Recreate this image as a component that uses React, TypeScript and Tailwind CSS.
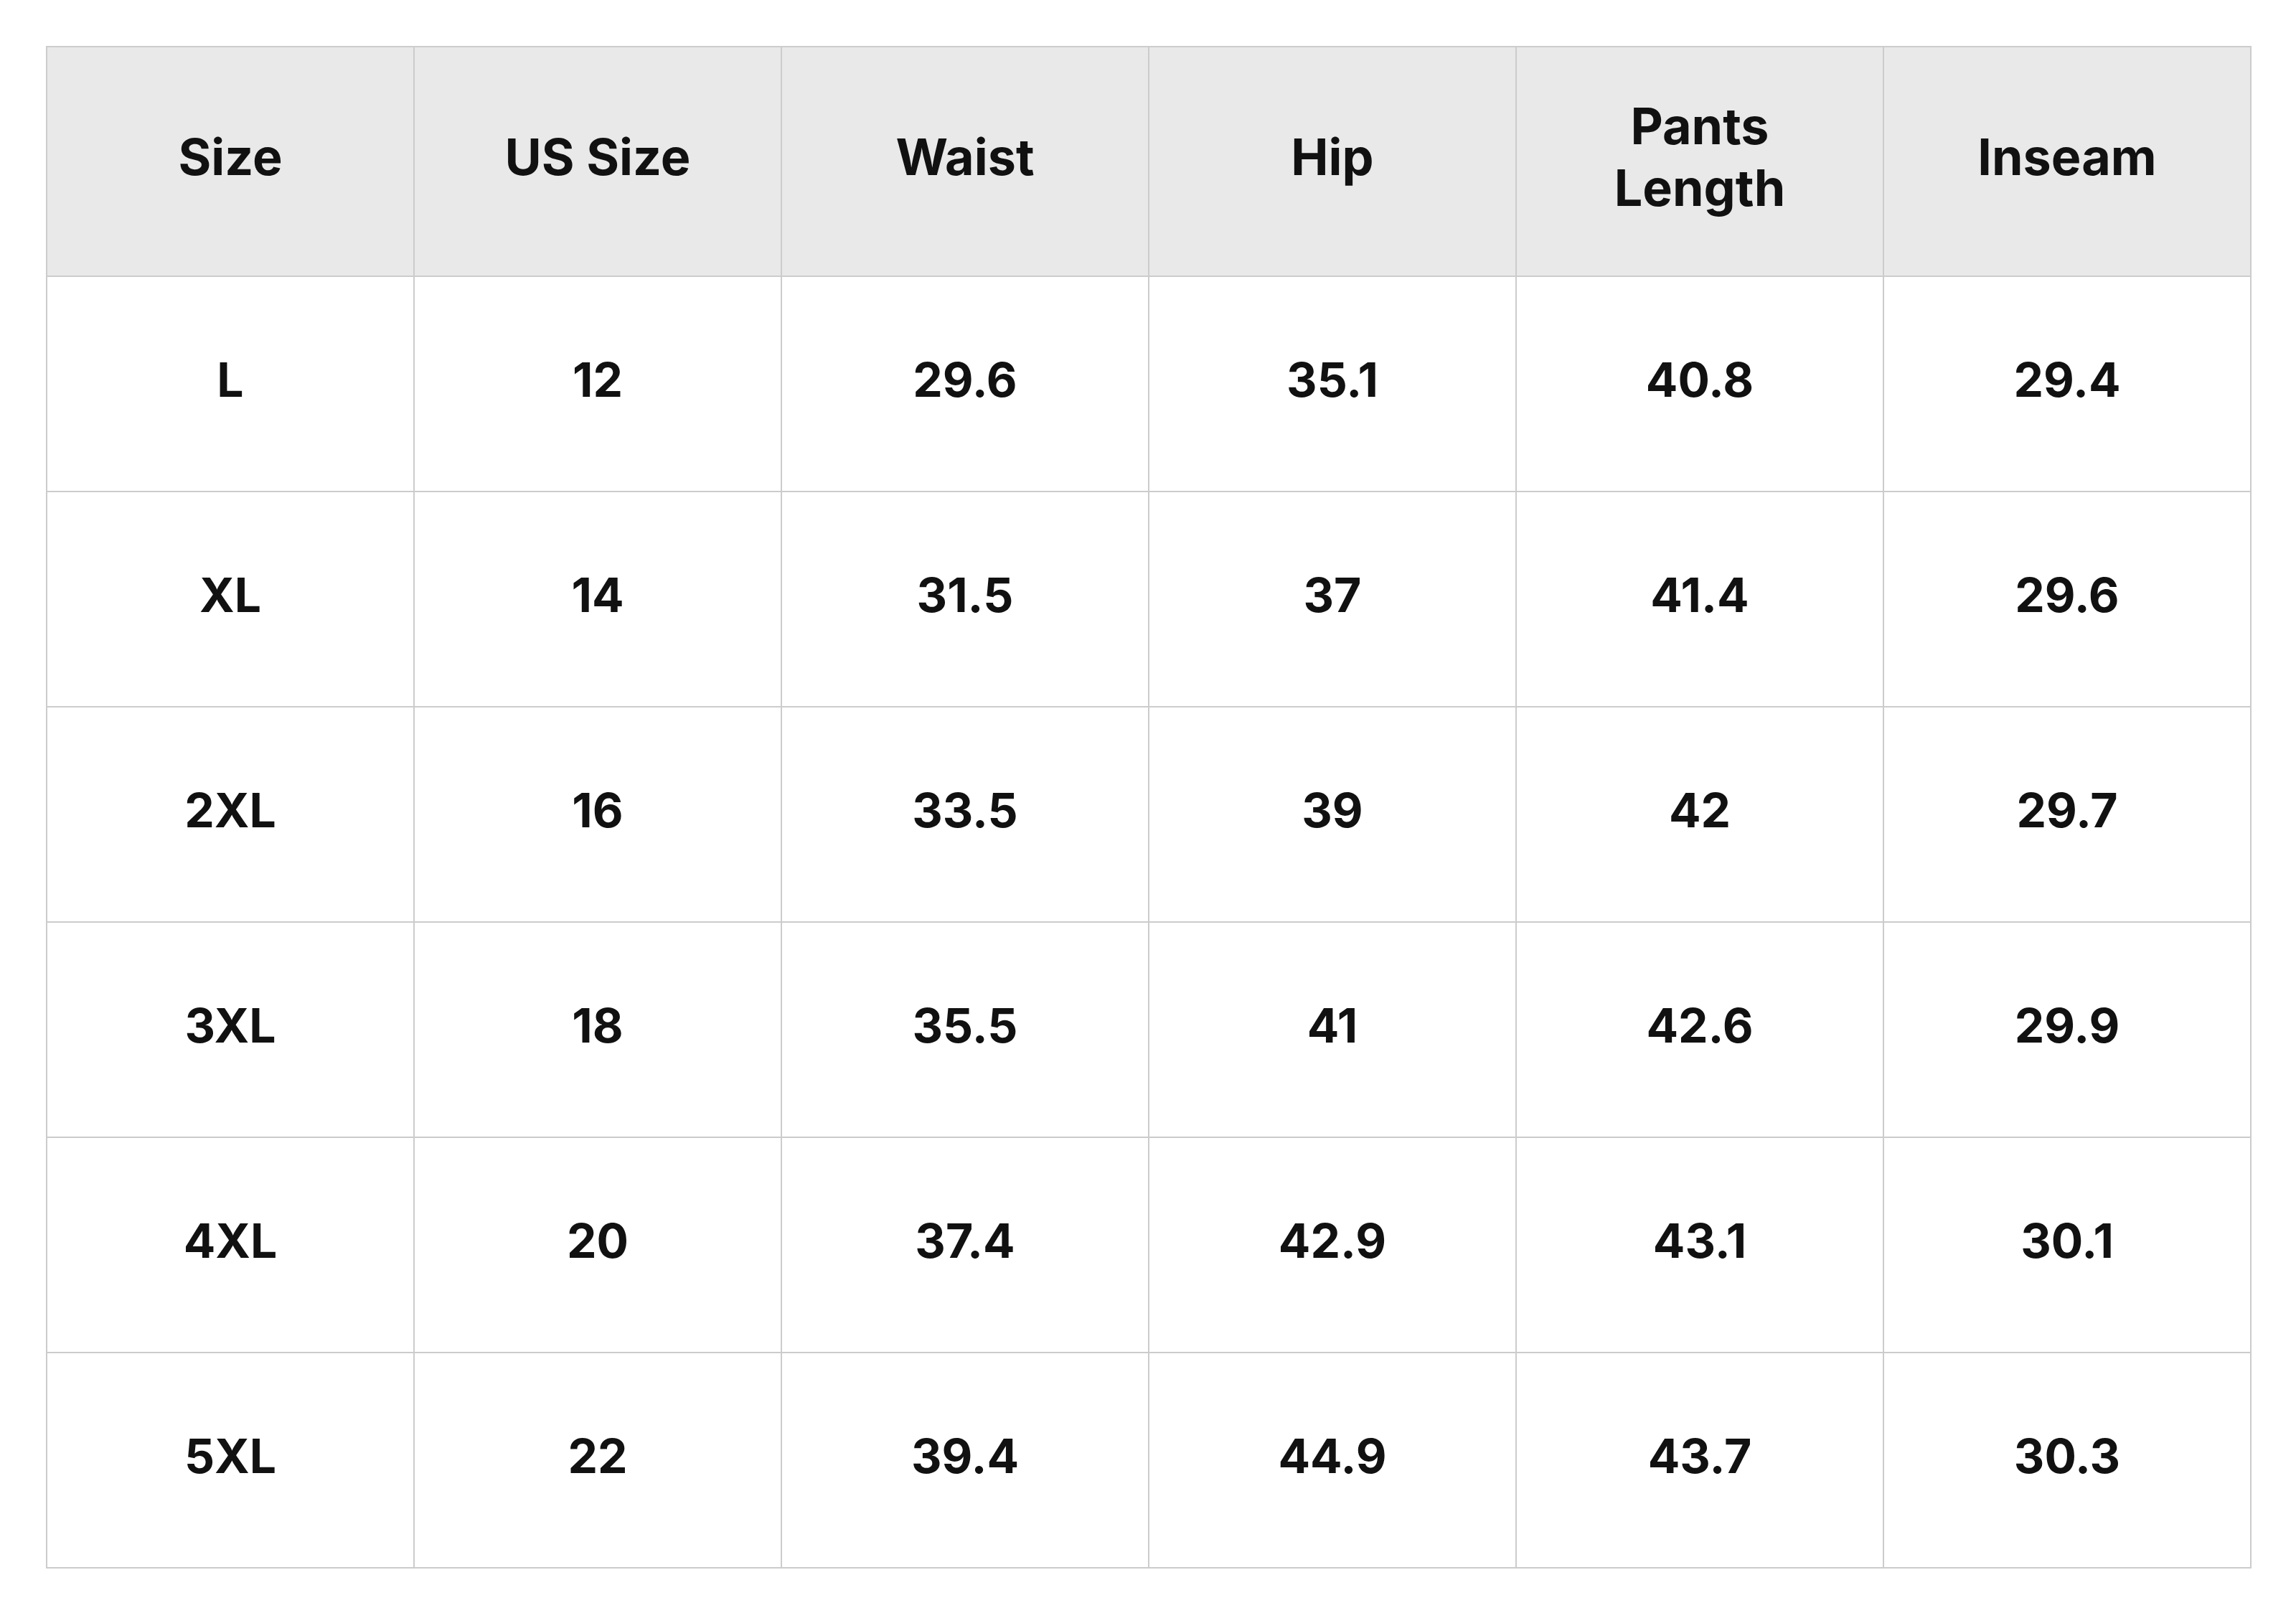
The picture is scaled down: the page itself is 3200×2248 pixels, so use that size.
import React from "react";

const headers: React.ReactNode[] = [
  "Size",
  "US Size",
  "Waist",
  "Hip",
  <>
    Pants
    <br />
    Length
  </>,
  "Inseam",
];

const rows: string[][] = [
  ["L", "12", "29.6", "35.1", "40.8", "29.4"],
  ["XL", "14", "31.5", "37", "41.4", "29.6"],
  ["2XL", "16", "33.5", "39", "42", "29.7"],
  ["3XL", "18", "35.5", "41", "42.6", "29.9"],
  ["4XL", "20", "37.4", "42.9", "43.1", "30.1"],
  ["5XL", "22", "39.4", "44.9", "43.7", "30.3"],
];

export default function App() {
  return (
    <div className="w-[3200px] h-[2248px] bg-white pt-[64px] pl-[64px]">
      <div
        className="w-[3074px] grid grid-cols-6 border-l-2 border-t-2 border-[#cccccc] text-[#111111]"
        style={{ fontFamily: "Inter, 'Noto Sans', sans-serif" }}
      >
        {headers.map((h, i) => (
          <div
            key={i}
            className="h-[320px] pb-[12px] bg-[#e9e9e9] border-r-2 border-b-2 border-[#cccccc] flex items-center justify-center text-center text-[70px] leading-[86px] font-bold"
          >
            <span>{h}</span>
          </div>
        ))}
        {rows.map((r, ri) =>
          r.map((c, ci) => (
            <div
              key={`${ri}-${ci}`}
              className="h-[300px] pb-[12px] bg-white border-r-2 border-b-2 border-[#cccccc] flex items-center justify-center text-[66px] font-bold"
            >
              {c}
            </div>
          ))
        )}
      </div>
    </div>
  );
}
